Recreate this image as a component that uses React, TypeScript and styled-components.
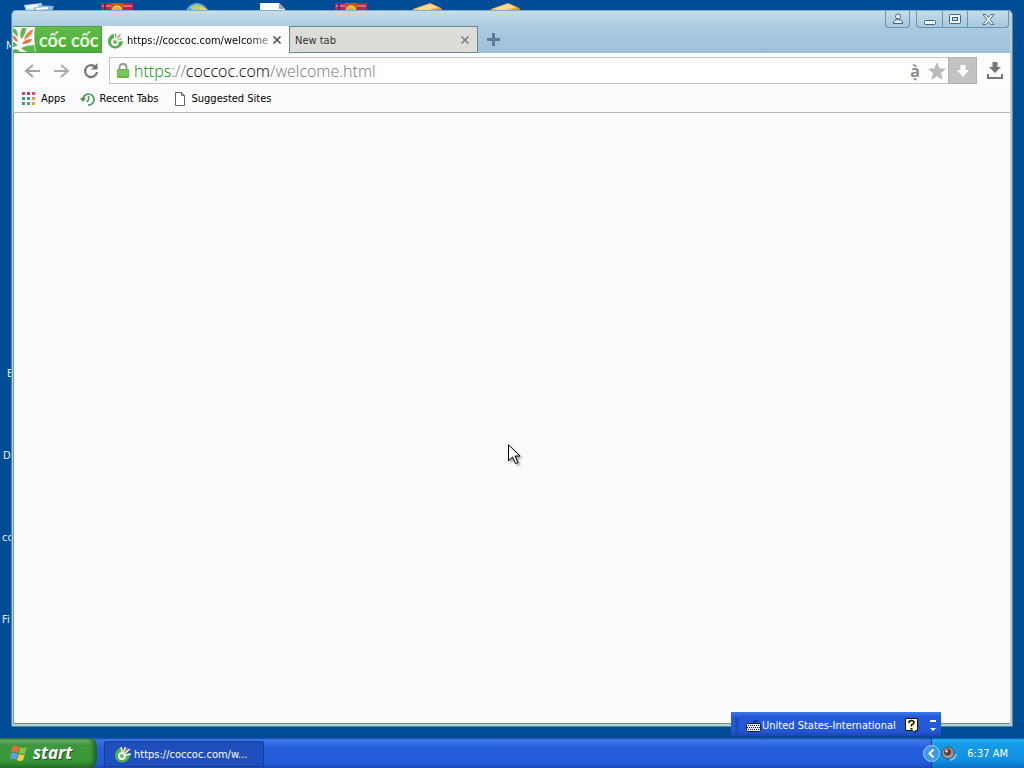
import React from "react";
import styled, { createGlobalStyle } from "styled-components";

const GlobalStyle = createGlobalStyle`
  * { box-sizing: border-box; }
  html, body, #root { height: 100%; margin: 0; }
  body { overflow: hidden; font: 11px/14px "DejaVu Sans Condensed", "Noto Sans", sans-serif; color: #000; }
  button, input { font: inherit; color: inherit; margin: 0; padding: 0; border: 0; background: none; }
  button { cursor: default; }
  svg { display: block; flex: none; }
`;

const Screen = styled.div`
  height: 100%;
  display: flex;
  flex-direction: column;
  background: #014c97;
`;

const Desktop = styled.main`
  position: relative;
  flex: 1;
  min-height: 0;
  display: flex;
  padding: 10px 11px 11px;
`;

const Shortcut = styled.div<{ $left: number }>`
  position: absolute;
  top: 2px;
  left: ${(p) => p.$left}px;
`;

const ShortcutLabel = styled.span<{ $left: number; $top: number }>`
  position: absolute;
  left: ${(p) => p.$left}px;
  top: ${(p) => p.$top}px;
  color: #e4f4ff;
`;

const Window = styled.section`
  position: relative;
  flex: 1;
  min-width: 0;
  display: flex;
  flex-direction: column;
  border: 1px solid #5c8792;
  border-top-color: #7db0cf;
  border-radius: 5px 5px 2px 2px;
  background: #b3d3dc;
  padding: 0 2px 2px 1px;
`;

const TitleBar = styled.header`
  height: 42px;
  display: flex;
  align-items: flex-end;
  border-radius: 4px 4px 0 0;
  background: linear-gradient(#c6dcea, #a9cadf 40%, #9dc0d9);
`;

const Brand = styled.button`
  width: 89px;
  height: 27px;
  display: flex;
  align-items: center;
  background: linear-gradient(#63bb4c, #4cad36);
  border: 1px solid #4c9b49;
  border-left: 0;
  color: #e6f9e0;
  font: bold 18px/22px Lato, "Open Sans", sans-serif;
`;

const BrandName = styled.span`
  padding-left: 3px;
`;

const TabStrip = styled.div`
  flex: 1;
  min-width: 0;
  display: flex;
  align-items: flex-end;
`;

const Tab = styled.div<{ $active?: boolean }>`
  width: ${(p) => (p.$active ? 187 : 189)}px;
  height: 27px;
  display: flex;
  align-items: center;
  gap: 3px;
  padding: 1px 7px 0 5px;
  border: solid #6e8793;
  border-width: ${(p) => (p.$active ? "0" : "1px")};
  background: ${(p) => (p.$active ? "#fdfdfd" : "#dcddd9")};
  color: ${(p) => (p.$active ? "#000" : "#333")};
`;

const TabTitle = styled.span<{ $fade?: boolean }>`
  flex: 1;
  min-width: 0;
  padding-top: 1px;
  overflow: hidden;
  white-space: nowrap;
  mask-image: ${(p) => (p.$fade ? "linear-gradient(to right, #000 85%, #0006)" : "none")};
`;

const NewTab = styled.button`
  padding: 7px 9px;
`;

const WindowControls = styled.div`
  align-self: flex-start;
  display: flex;
  gap: 6px;
  margin-right: 1px;
`;

const ControlGroup = styled.div`
  display: flex;
  height: 17px;
  border: 1px solid #6c94ad;
  border-top: 0;
  border-radius: 0 0 4px 4px;
  background: linear-gradient(#c3dcea, #a6c9de);
`;

const ControlButton = styled.button<{ $width: number }>`
  width: ${(p) => p.$width}px;
  display: flex;
  align-items: center;
  justify-content: center;
  & + & { border-left: 1px solid #6c94ad; }
`;

const Toolbar = styled.div`
  display: flex;
  align-items: center;
  padding: 4px 7px 0 4px;
  border-left: 1px solid #8fb0b8;
  background: #fdfdfd;
`;

const NavButton = styled.button`
  width: 29px;
  height: 27px;
  display: flex;
  align-items: center;
  justify-content: center;
`;

const AddressBar = styled.div`
  flex: 1;
  min-width: 0;
  height: 27px;
  margin: 0 10px 0 4px;
  display: flex;
  align-items: center;
  border: 1px solid #c3c3c3;
  background: #fff;
  padding-left: 7px;
`;

const Address = styled.a`
  flex: 1;
  min-width: 0;
  margin-left: 5px;
  color: #757575;
  text-decoration: none;
  font: 300 16px/22px "Open Sans", "Noto Sans", sans-serif;
`;

const Scheme = styled.span`
  color: #0a8a0a;
`;

const Host = styled.span`
  color: #000;
`;

const BarButton = styled.button<{ $filled?: boolean }>`
  width: ${(p) => (p.$filled ? 29 : 22)}px;
  height: 27px;
  display: flex;
  align-items: center;
  justify-content: center;
  background: ${(p) => (p.$filled ? "#c2c2c2" : "none")};
  border: ${(p) => (p.$filled ? "1px solid #b1b1b1" : "0")};
  margin-right: ${(p) => (p.$filled ? -1 : 0)}px;
  color: #8a8a8a;
  font: bold 16px/20px "Noto Sans", sans-serif;
`;

const Bookmarks = styled.nav`
  height: 29px;
  display: flex;
  align-items: center;
  gap: 14px;
  padding: 1px 8px 0;
  border-left: 1px solid #8fb0b8;
  background: #fcfcfc;
  border-bottom: 1px solid #b9b9b9;
`;

const Bookmark = styled.a`
  display: flex;
  align-items: center;
  gap: 5px;
  color: #000;
  text-decoration: none;
`;

const Page = styled.div`
  flex: 1;
  background: #fbfbfb;
  border-left: 1px solid #7d9b9b;
  border-bottom: 1px solid #6d8b8b;
`;

const LanguageBar = styled.div`
  position: absolute;
  right: 83px;
  bottom: 2px;
  width: 210px;
  height: 24px;
  display: flex;
  align-items: center;
  padding: 3px 5px 0 4px;
  background: linear-gradient(#3f79e8, #245ad8 20%, #2358d5 80%, #1c45b4);
  color: #fff;
`;

const LanguageButton = styled.button`
  display: flex;
  align-items: center;
  gap: 1px;
  margin: 0 auto 0 7px;
  white-space: nowrap;
`;

const LanguageTools = styled.div`
  display: flex;
  gap: 11px;
  align-items: center;
`;

const Pointer = styled.svg`
  position: absolute;
  left: 508px;
  top: 444px;
  filter: drop-shadow(2px 2px 1px #0005);
`;

const Taskbar = styled.footer`
  height: 30px;
  display: flex;
  background: linear-gradient(#1941a5 0, #3c7bea 2px, #326fe4 5px, #245cdb 10px, #245edd 24px, #1d48b8);
  color: #fff;
`;

const StartButton = styled.button`
  width: 97px;
  display: flex;
  align-items: center;
  gap: 5px;
  padding-left: 10px;
  border-radius: 0 8px 8px 0;
  background: linear-gradient(#357a35 0, #6fb36d 2px, #40963e 7px, #369a36 22px, #2a7628);
  box-shadow: inset -3px 0 4px #1c5d26;
  color: #fff;
  font: italic bold 17px/20px "Noto Sans", sans-serif;
  text-shadow: 1px 1px 1px #1d4d1a;
`;

const TaskButton = styled.button`
  width: 160px;
  height: 26px;
  margin: 3px auto 0 7px;
  display: flex;
  align-items: center;
  gap: 3px;
  padding: 1px 0 0 9px;
  border: 1px solid #173f94;
  border-radius: 2px;
  background: #1e4fbd;
`;

const Tray = styled.div`
  width: 93px;
  display: flex;
  align-items: center;
  justify-content: space-between;
  padding: 1px 16px 0 0;
  background: linear-gradient(#0c59b9 0, #22b0f3 2px, #159be8 6px, #1190e3 22px, #0d6fc4);
  border-left: 1px solid #0d3d9a;
`;

const TrayIcons = styled.div`
  display: flex;
  align-items: center;
  gap: 1px;
  margin-left: -9px;
`;

const CocIcon = ({ size = 17 }: { size?: number }) => (
  <svg width={size} height={size} viewBox="0 0 17 17">
    <path d="M9 1.500A7.500 7.500 0 1 0 16 9l-4-1-3-2z" fill="#4fb04c" />
    <circle cx="8" cy="9.500" r="7" fill="#4fb04c" opacity=".75" />
    <circle cx="8" cy="10" r="3" fill="#6cbf62" stroke="#fff" strokeWidth="1.800" />
    <path d="M8 6 7 1M9.500 6l2-5M11 7l5-4M12 9l5-1" stroke="#fff" strokeWidth="1.300" />
    <path d="m10.500 6 3-4" stroke="#e88a4a" strokeWidth="1.200" />
  </svg>
);

const BrandMark = () => (
  <svg width="23" height="25" viewBox="0 0 23 25">
    <path d="M0 0h22q-2 12 1 25H0z" fill="#fff" />
    <path d="M0 1q5 1 5 9Q1 7 0 5z" fill="#5cb848" />
    <path d="M9 1h4q0 7-5 11Q6 7 9 1z" fill="#5cb848" />
    <path d="M20 2q0 6-9 11 1-7 9-11z" fill="#ef7d43" />
    <path d="M0 8q4 2 5 7-4-1-5-4z" fill="#ef7d43" />
    <path d="M19 12q-1 5-10 5 2-5 10-5z" fill="#e8743d" />
    <path d="M0 15q4 1 4 4l-4 1z" fill="#5cb848" />
    <path d="M21 18q1 3 1 7h-8q-4-2-6-4 6-3 13-3z" fill="#5cb848" />
    <path d="M0 25v-2q4-3 7 2z" fill="#5cb848" />
  </svg>
);

const CloseIcon = ({ color }: { color: string }) => (
  <svg width="10" height="10" viewBox="0 0 10 10">
    <path d="m1.500 1.500 7 7m0-7-7 7" stroke={color} strokeWidth="1.700" />
  </svg>
);

const ArrowIcon = ({ flip }: { flip?: boolean }) => (
  <svg width="17" height="16" viewBox="0 0 17 16">
    <path d={flip ? "M1 8h14M8 2l7 6-7 6" : "M16 8H2m7-6L2 8l7 6"} fill="none" stroke={flip ? "#aaa" : "#a3a3a3"} strokeWidth="2" />
  </svg>
);

const appColours = ["#d34873", "#c83d55", "#d34873", "#44a064", "#5387cb", "#e0a047", "#4488cf", "#48a868", "#e4a83c"];

const labels = [
  { text: "M", left: 6, top: 39 },
  { text: "E", left: 7, top: 367 },
  { text: "D", left: 3, top: 449 },
  { text: "co", left: 2, top: 531 },
  { text: "Fi", left: 2, top: 613 },
];

const Archive = () => (
  <svg width="32" height="12">
    <path d="M0 1h32v11H0z" fill="#b7294a" />
    <path d="M1 3h30v2H1z" fill="#e8647a" />
    <path d="M3 1h2v11H3z" fill="#7c1c50" />
    <path d="M10 1h12v11H10z" fill="#d74920" />
    <path d="M12 9V6q4-4 8 0v3" fill="#f3a52b" stroke="#f4d04b" strokeWidth="1.500" />
  </svg>
);

const Box = () => (
  <svg width="32" height="12">
    <path d="M1 7 18 1l11 5 3 6H0z" fill="#edb34f" />
    <path d="m3 7 15-5 8 3-14 4z" fill="#ffdc8f" />
    <path d="m1 8 12 2 16-4 2 6H1z" fill="#d6923a" />
  </svg>
);

export default function App() {
  return (
    <Screen>
      <GlobalStyle />
      <Desktop>
        <Shortcut $left={22}>
          <svg width="32" height="12">
            <path d="m2 3 18-2-3 11H5z" fill="#c9e3f6" />
            <path d="m12 3 20 1-3 8H12z" fill="#88b9e4" />
            <path d="m5 5 11-1m-2 3 12-1" stroke="#fff" strokeWidth="2" />
          </svg>
        </Shortcut>
        <Shortcut $left={101}><Archive /></Shortcut>
        <Shortcut $left={185}>
          <svg width="24" height="12">
            <circle cx="12" cy="13" r="12" fill="#5ba7dc" />
            <path d="m5 5 7-3 5 6-6 4z" fill="#b6d65b" />
            <path d="m14 3 9 5-2 4h-5z" fill="#f0d94b" />
          </svg>
        </Shortcut>
        <Shortcut $left={260}>
          <svg width="26" height="12">
            <path d="M0 1h19l6 6v5H0z" fill="#fcfdfd" />
            <path d="m19 1 6 6h-6z" fill="#8fa5b7" />
          </svg>
        </Shortcut>
        <Shortcut $left={335}><Archive /></Shortcut>
        <Shortcut $left={412}><Box /></Shortcut>
        <Shortcut $left={490}><Box /></Shortcut>
        {labels.map((l) => (
          <ShortcutLabel key={l.text} $left={l.left} $top={l.top}>{l.text}</ShortcutLabel>
        ))}

        <Window>
          <TitleBar>
            <Brand>
              <BrandMark />
              <BrandName>cốc cốc</BrandName>
            </Brand>
            <TabStrip>
              <Tab $active>
                <CocIcon />
                <TabTitle $fade>https://coccoc.com/welcome</TabTitle>
                <button aria-label="Close tab"><CloseIcon color="#555" /></button>
              </Tab>
              <Tab>
                <TabTitle>New tab</TabTitle>
                <button aria-label="Close tab"><CloseIcon color="#808080" /></button>
              </Tab>
              <NewTab aria-label="Open new tab">
                <svg width="13" height="13"><path d="M6.500 0v13M0 6.500h13" stroke="#5b7c94" strokeWidth="3" /></svg>
              </NewTab>
            </TabStrip>
            <WindowControls>
              <ControlGroup>
                <ControlButton $width={23} aria-label="Profile">
                  <svg width="12" height="12" fill="#e7f4fb" stroke="#3f6580"><circle cx="6" cy="3.500" r="2.500" /><path d="M1.500 10.500V9q1-2.500 4.500-2.500T10.500 9v1.500z" /></svg>
                </ControlButton>
              </ControlGroup>
              <ControlGroup>
                <ControlButton $width={25} aria-label="Minimize">
                  <svg width="12" height="12"><rect x=".5" y="7.500" width="11" height="4" rx="1" fill="#eef7fb" stroke="#3f6580" /></svg>
                </ControlButton>
                <ControlButton $width={25} aria-label="Maximize">
                  <svg width="12" height="10"><rect x=".5" y=".5" width="11" height="9" rx="1" fill="#eef7fb" stroke="#3f6580" /><rect x="3.500" y="3.500" width="5" height="3" fill="#b9d5e5" stroke="#3f6580" /></svg>
                </ControlButton>
                <ControlButton $width={41} aria-label="Close">
                  <svg width="13" height="11"><path d="M1 .5h3l2.500 3 2.500-3h3l-4 5 4 5H9l-2.500-3-2.500 3H1l4-5z" fill="#eef7fb" stroke="#4f7288" /></svg>
                </ControlButton>
              </ControlGroup>
            </WindowControls>
          </TitleBar>

          <Toolbar>
            <NavButton aria-label="Back"><ArrowIcon /></NavButton>
            <NavButton aria-label="Forward"><ArrowIcon flip /></NavButton>
            <NavButton aria-label="Reload">
              <svg width="16" height="17" viewBox="0 0 16 17"><path d="M12.500 5A6 6 0 1 0 14 10" fill="none" stroke="#777" strokeWidth="2.200" /><path d="M14.500 1v6.500H8z" fill="#777" /></svg>
            </NavButton>
            <AddressBar>
              <svg width="12" height="15"><path d="M2.500 8V4.500q0-3.500 3.500-3.500t3.500 3.500V8" fill="none" stroke="#8a9a86" strokeWidth="1.800" /><rect y="6" width="12" height="9" rx="1" fill="#64b84a" /><path d="M1 8h10M1 10h10M1 12h10" stroke="#8ed873" /></svg>
              <Address href="https://coccoc.com/welcome.html"><Scheme>https</Scheme>://<Host>coccoc.com</Host>/welcome.html</Address>
              <BarButton aria-label="Accent marks">ạ̀</BarButton>
              <BarButton aria-label="Bookmark this page">
                <svg width="18" height="18" viewBox="0 0 18 18"><path d="m9 0 2.600 6.200L18 6.800l-4.900 4.300L14.600 18 9 14.300 3.400 18l1.500-6.900L0 6.800l6.400-.6z" fill="#bababa" /></svg>
              </BarButton>
              <BarButton $filled aria-label="Save media">
                <svg width="14" height="14"><path d="M4.500 1h5v5H13l-6 7-6-7h3.500z" fill="#fff" /></svg>
              </BarButton>
            </AddressBar>
            <button aria-label="Downloads">
              <svg width="16" height="17"><path d="M5.500 0h5v5H14l-6 6-6-6h3.500z" fill="#777" /><path d="M1 12v4h14v-4" fill="none" stroke="#777" strokeWidth="2" /></svg>
            </button>
          </Toolbar>

          <Bookmarks>
            <Bookmark href="#apps">
              <svg width="14" height="14">{appColours.map((c, i) => <rect key={i} x={(i % 3) * 5} y={Math.floor(i / 3) * 5} width="3" height="3" fill={c} />)}</svg>
              Apps
            </Bookmark>
            <Bookmark href="#recent">
              <svg width="15" height="14" viewBox="0 0 15 14"><path d="M3 8a5.500 5.500 0 1 1 5 5" fill="none" stroke="#479557" strokeWidth="1.700" /><path d="M0 6h6L3 10z" fill="#479557" /><path d="M8.500 4v4L6.500 10" fill="none" stroke="#479557" strokeWidth="1.500" /></svg>
              Recent Tabs
            </Bookmark>
            <Bookmark href="#suggested">
              <svg width="14" height="14"><path d="M2.500.5h6l3 3v10h-9zM8.500.5v3h3" fill="#fff" stroke="#666" /></svg>
              Suggested Sites
            </Bookmark>
          </Bookmarks>
          <Page />
        </Window>

        <LanguageBar>
          <svg width="4" height="17"><path d="M1 0v17M3 2v15" stroke="#153b9b" strokeWidth="1.500" strokeDasharray="2 2" /></svg>
          <LanguageButton>
            <svg width="15" height="12"><path d="M8 3V1h4" fill="none" stroke="#0d1c43" /><rect x=".5" y="3.500" width="14" height="8" rx="1" fill="#e8ecf4" stroke="#111a37" /><path d="M2 5.500h12M1 7.500h13M2 9.500h11" stroke="#111a37" strokeDasharray="1 1" /></svg>
            United States-International
          </LanguageButton>
          <LanguageTools>
            <button aria-label="Help">
              <svg width="14" height="15"><path d="M.5.5h12v12h-2v2l-3-2h-7z" fill="#fffbd8" stroke="#111" /><path d="M4 5q0-2.500 2.500-2.500T9 4.500Q9 6 6.500 7v1.500" fill="none" stroke="#111" strokeWidth="1.600" /><path d="M5.500 10h2v1.500h-2z" /></svg>
            </button>
            <button aria-label="Language options">
              <svg width="6" height="14"><path d="M0 1h6v2H0zM0 9h6l-3 3z" fill="#fff" /></svg>
            </button>
          </LanguageTools>
        </LanguageBar>

        <Pointer width="13" height="21" viewBox="0 0 13 21">
          <path d="M.5.800v16l4-3.800 3 6.500 2.500-1-3-6.500h5z" fill="#fff" stroke="#000" />
        </Pointer>
      </Desktop>

      <Taskbar>
        <StartButton>
          <svg width="18" height="17" viewBox="0 0 18 17"><path d="M3 1q3-1 6 1L8 8Q5 6 1 7z" fill="#e96a3b" /><path d="M10 2q4 2 7 0l-2 6q-3 2-6 0z" fill="#83c644" /><path d="M1 8q4-1 7 1l-2 6q-3-2-6-1z" fill="#5f9be6" /><path d="M9 9q3 2 6 0l-2 6q-3 2-6 0z" fill="#f4cd45" /></svg>
          start
        </StartButton>
        <TaskButton><CocIcon />https://coccoc.com/w...</TaskButton>
        <Tray>
          <TrayIcons>
            <button aria-label="Show hidden icons">
              <svg width="17" height="17"><circle cx="8.500" cy="8.500" r="8" fill="#3c9be8" stroke="#a4d2f4" /><path d="m10.500 4.500-4 4 4 4" fill="none" stroke="#fff" strokeWidth="2" /></svg>
            </button>
            <svg width="16" height="16"><circle cx="7" cy="7" r="6" fill="#9b9b9b" stroke="#4d4a51" /><circle cx="6.500" cy="6" r="3.500" fill="#613e3a" /><circle cx="5.500" cy="5" r="1.500" fill="#d5c9c3" /><path d="M9 14q5-1 6-6" fill="none" stroke="#7fbdf0" strokeWidth="2" /></svg>
          </TrayIcons>
          <time>6:37 AM</time>
        </Tray>
      </Taskbar>
    </Screen>
  );
}
